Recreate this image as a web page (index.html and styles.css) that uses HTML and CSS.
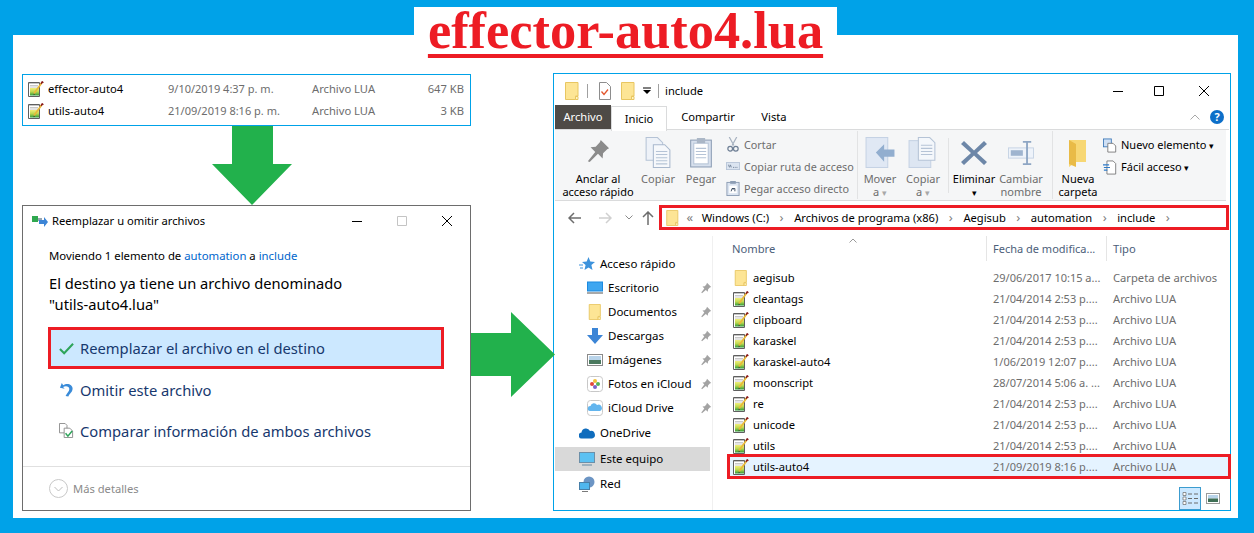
FILE: index.html
```html
<!DOCTYPE html>
<html lang="es">
<head>
<meta charset="utf-8">
<title>effector-auto4.lua</title>
<link rel="stylesheet" href="styles.css">
</head>
<body>
<svg class="defs" aria-hidden="true">
  <defs>
    <linearGradient id="luaG" x1="0" y1="0" x2="0" y2="1"><stop offset="0" stop-color="#f2ee7a"/><stop offset="0.5" stop-color="#bcd84f"/><stop offset="1" stop-color="#2f9a3a"/></linearGradient>
    <symbol id="lua" viewBox="0 0 16 16">
      <path d="M.5 1.500h11v14H.5z" fill="#fff" stroke="#5f5f5f"/>
      <path d="M1.500 2.500h9" stroke="#8a8a8a" stroke-dasharray="1 1"/>
      <path d="M2 4.500h8M2 6h8" stroke="#c8c8c8"/>
      <rect x="2" y="7" width="9" height="7.500" fill="url(#luaG)"/>
      <path d="M6 12.500 14 1.500" stroke="#e9b93a" stroke-width="1.800"/>
      <path d="M13 2.800 14.200 .8l1.200.9" stroke="#8b1a1a" stroke-width="1.400" fill="none"/>
      <path d="M6 12.600l-.6 1.600 1.500-.8z" fill="#333"/>
    </symbol>
    <symbol id="folder" viewBox="0 0 14 18">
      <path d="M.5.5h12.500v13.500h-2.500v3.500H.5z" fill="#fde595" stroke="#e8c661"/>
      <path d="M10.500 14.500h2.500v3h-2.500z" fill="#fff3c4" stroke="#e8c661"/>
    </symbol>
    <symbol id="pin" viewBox="0 0 12 12">
      <path d="M7 .8 11.200 5 9.800 5.600 8 7.500 7.800 9.800 5.800 8 2 11.200 1.300 10.500 4.300 6.500 2.500 4.500 4.800 4.200 6.500 2.300z" fill="#a3a3a3"/>
    </symbol>
  </defs>
</svg>

<div class="page">
  <h1 class="title"><span class="title-text">effector-auto4.lua</span></h1>
  <main class="panel">
    <section class="left">
      <div class="files">
        <div class="file-row">
          <svg class="ic16"><use href="#lua"/></svg>
          <span class="f-name">effector-auto4</span><span class="f-date">9/10/2019 4:37 p. m.</span><span class="f-type">Archivo LUA</span><span class="f-size">647 KB</span>
        </div>
        <div class="file-row">
          <svg class="ic16"><use href="#lua"/></svg>
          <span class="f-name">utils-auto4</span><span class="f-date">21/09/2019 8:16 p. m.</span><span class="f-type">Archivo LUA</span><span class="f-size">3 KB</span>
        </div>
      </div>
      <svg class="arrow-down" viewBox="0 0 80 79"><path d="M20 0h41v38h19L40 79 0 38h20z" fill="#22b14c"/></svg>
      <div class="dialog">
        <div class="dlg-title">
          <svg class="dlg-icon" viewBox="0 0 16 12"><rect y="1" width="6" height="6" fill="#2fa84f"/><rect x="6" y="3" width="4" height="3" fill="#9aa7b3"/><path d="M7 5h5V2l4 5-4 5V9H7z" fill="#3c85d6"/></svg>
          <span class="dlg-caption">Reemplazar u omitir archivos</span>
          <svg class="dlg-ctl" viewBox="0 0 12 12"><path d="M1 6.500h10" stroke="#000"/></svg>
          <svg class="dlg-ctl" viewBox="0 0 12 12"><path d="M1.500 1.500h9v9h-9z" fill="none" stroke="#c4c4c4"/></svg>
          <svg class="dlg-ctl" viewBox="0 0 12 12"><path d="M1 1l10 10M11 1 1 11" stroke="#000" fill="none"/></svg>
        </div>
        <p class="dlg-moving">Moviendo 1 elemento de <span class="link">automation</span> a <span class="link">include</span></p>
        <p class="dlg-main">El destino ya tiene un archivo denominado<br>"utils-auto4.lua"</p>
        <div class="option option-on">
          <svg class="opt-ic" viewBox="0 0 16 16"><path d="M1 8.500 5.500 13 15 3" fill="none" stroke="#2ea45a" stroke-width="2.200"/></svg>
          <span>Reemplazar el archivo en el destino</span>
        </div>
        <div class="option">
          <svg class="opt-ic" viewBox="0 0 16 16"><path d="M3 1 1 6l5 1.200-1.600-1.800C7 4 11 4.500 11 7.500c0 2.500-2.500 4-4 7.500l3 .5c1-3 4.500-4.500 4.500-8.500C14.500 2.500 8.500.5 4.500 3.500z" fill="#3a8bd8"/></svg>
          <span>Omitir este archivo</span>
        </div>
        <div class="option">
          <svg class="opt-ic" viewBox="0 0 16 16"><path d="M.5.5h6l2 2v8h-8z" fill="#fff" stroke="#8d8d8d"/><path d="M5.500 5.500h6l3 3v7h-9z" fill="#fff" stroke="#8d8d8d"/><path d="M7 11l2.500 3L14 8.500" fill="none" stroke="#2ea45a" stroke-width="1.600"/></svg>
          <span>Comparar información de ambos archivos</span>
        </div>
        <div class="dlg-foot">
          <svg class="more-ic" viewBox="0 0 19 19"><circle cx="9.500" cy="9.500" r="9" fill="#fff" stroke="#c8c8c8"/><path d="M5.500 8l4 4 4-4" fill="none" stroke="#bdbdbd"/></svg>
          <span>Más detalles</span>
        </div>
      </div>
    </section>

    <div class="mid">
      <svg class="arrow-right" viewBox="0 0 84 85"><path d="M0 21h40V0l44 42.500L40 85V64H0z" fill="#22b14c"/></svg>
    </div>

    <section class="explorer">
      <div class="ex-title">
        <svg class="qa-folder"><use href="#folder"/></svg>
        <i class="qa-sep"></i>
        <svg class="qa-check" viewBox="0 0 12 18"><path d="M.5.5h7l4 4v13H.5z" fill="#fff" stroke="#8d8d8d"/><path d="M2.500 9.500l2.500 3 4-5" fill="none" stroke="#e2562d" stroke-width="1.300"/></svg>
        <svg class="qa-folder2"><use href="#folder"/></svg>
        <svg class="qa-down" viewBox="0 0 8 8"><path d="M0 1h8" stroke="#000"/><path d="M0 3h8L4 7z" fill="#000"/></svg>
        <i class="qa-sep qa-sep2"></i>
        <span class="ex-caption">include</span>
        <svg class="win-ctl" viewBox="0 0 12 12"><path d="M1 6.500h10" stroke="#000"/></svg>
        <svg class="win-ctl max" viewBox="0 0 12 12"><path d="M1.500 1.500h9v9h-9z" fill="none" stroke="#000"/></svg>
        <svg class="win-ctl" viewBox="0 0 12 12"><path d="M1 1l10 10M11 1 1 11" stroke="#000" fill="none"/></svg>
      </div>
      <div class="tabs">
        <span class="tab tab-file">Archivo</span>
        <span class="tab tab-on">Inicio</span>
        <span class="tab tab-c">Compartir</span>
        <span class="tab tab-v">Vista</span>
        <svg class="tab-chev" viewBox="0 0 10 6"><path d="M.5 5.500 5 1l4.500 4.500" fill="none" stroke="#a8a8a8"/></svg>
        <span class="help">?</span>
      </div>
      <div class="ribbon">
        <div class="rb w-pin">
          <svg class="rb-ic" viewBox="0 0 26 26"><path d="M16 1l9 9-2 1-4.500 4.500-.5 5.500-5-5L4 25l-2-1 8-10-5-5 5.500-.5L15 3.500z" fill="#8b8b8b"/></svg>
          <span class="rb-l rb-on">Anclar al<br>acceso rápido</span>
        </div>
        <div class="rb w-copy">
          <svg class="rb-ic" viewBox="0 0 26 30"><path d="M1.500.5h11l5 5v17h-16z" fill="#eef2f8" stroke="#b5c3d6"/><path d="M8.500 7.500h11l5 5v17h-16z" fill="#f6f8fb" stroke="#a8b8cd"/><path d="M11 14h11M11 17h11M11 20h11M11 23h11M11 26h11" stroke="#b5c3d6"/></svg>
          <span class="rb-l">Copiar</span>
        </div>
        <div class="rb w-copy">
          <svg class="rb-ic" viewBox="0 0 22 30"><rect x="1" y="3" width="20" height="26" fill="#d7e0ed" stroke="#8c9db4"/><rect x="4" y="6" width="14" height="20" fill="#fff" stroke="#b5c3d6"/><rect x="7" y="1" width="8" height="5" fill="#aab6c6"/><path d="M6 11h10M6 14h10M6 17h10M6 20h10" stroke="#b5c3d6"/></svg>
          <span class="rb-l">Pegar</span>
        </div>
        <div class="rb-col w-small">
          <div class="rb-s"><svg class="s-ic" viewBox="0 0 14 16"><path d="M3 0l5 9M11 0 6 9" stroke="#a7b2c0" stroke-width="1.300"/><circle cx="4" cy="12.500" r="2.500" fill="none" stroke="#6e7f95" stroke-width="1.300"/><circle cx="10" cy="12.500" r="2.500" fill="none" stroke="#6e7f95" stroke-width="1.300"/></svg><span>Cortar</span></div>
          <div class="rb-s"><svg class="s-ic" viewBox="0 0 16 10"><rect x=".5" y=".5" width="15" height="8" fill="#dbe4f0" stroke="#b5c3d6"/><path d="M3 3l1 3M5 3l1 3M8 6h1M10 6h1M12 6h1" stroke="#5e7088"/></svg><span>Copiar ruta de acceso</span></div>
          <div class="rb-s"><svg class="s-ic" viewBox="0 0 14 16"><rect x=".5" y="1.500" width="13" height="14" fill="#dbe4f0" stroke="#8c9db4"/><rect x="4" y="0" width="6" height="3" fill="#8c9db4"/><rect x="3" y="5" width="8" height="8" fill="#fff"/><path d="M5 11l1-3 1.500 1M6 8h3v3" stroke="#38495f" fill="none"/></svg><span>Pegar acceso directo</span></div>
        </div>
        <i class="rb-sep"></i>
        <div class="rb w-move">
          <svg class="rb-ic" viewBox="0 0 28 30"><rect x=".5" y=".5" width="21" height="29" fill="#e0e8f4" stroke="#c5d2e4"/><path d="M10 15l8-8v5h10v7H18v5z" fill="#92aecf"/></svg>
          <span class="rb-l">Mover<br>a <b class="caret">▾</b></span>
        </div>
        <div class="rb w-move w-move2">
          <svg class="rb-ic" viewBox="0 0 28 30"><rect x=".5" y="3.500" width="21" height="26" fill="#dde6f2" stroke="#c5d2e4"/><path d="M9.500 .5h11l5 5v17h-16z" fill="#f4f7fb" stroke="#b5c3d6"/><path d="M12 8h11M12 11h11M12 14h11M12 17h11" stroke="#b5c3d6"/></svg>
          <span class="rb-l">Copiar<br>a <b class="caret">▾</b></span>
        </div>
        <i class="rb-sep short"></i>
        <div class="rb w-del">
          <svg class="rb-ic" viewBox="0 0 26 26"><path d="M3 1l10 9.500L23 1l3 3-10 9 10 9-3 3-10-9.500L3 25l-3-3 10-9L0 4z" fill="#6d87a8"/></svg>
          <span class="rb-l rb-on">Eliminar<br><b class="caret dark">▾</b></span>
        </div>
        <div class="rb w-ren">
          <svg class="rb-ic" viewBox="0 0 28 26"><rect x=".5" y="7.500" width="27" height="11" fill="#eef3fa" stroke="#c5d2e4"/><rect x="3" y="10" width="13" height="6" fill="#9fb4cf"/><path d="M16 1h9M16 25h9M20.500 1v24" stroke="#8ea6c4" stroke-width="2"/></svg>
          <span class="rb-l">Cambiar<br>nombre</span>
        </div>
        <i class="rb-sep"></i>
        <div class="rb w-new">
          <svg class="rb-ic" viewBox="0 0 20 28"><path d="M1 1h17v22H8l-7 5z" fill="#f7d774"/><path d="M1 1l7 4v23l-7-3z" fill="#e9bb47"/></svg>
          <span class="rb-l rb-on">Nueva<br>carpeta</span>
        </div>
        <div class="rb-col w-new2">
          <div class="rb-s"><svg class="s-ic" viewBox="0 0 16 16"><rect x=".5" y=".5" width="9" height="9" fill="#cfe0f5" stroke="#3c78b8"/><path d="M5.500 5.500h6l3 3v7h-9z" fill="#fff" stroke="#777"/></svg><span class="dark-t">Nuevo elemento <b class="caret dark">▾</b></span></div>
          <div class="rb-s"><svg class="s-ic" viewBox="0 0 16 16"><path d="M4.500.5h7l3 3v12h-10z" fill="#fff" stroke="#777"/><path d="M0 5h7M1 8h7M1 11h4" stroke="#2f7bc8" stroke-width="1.300"/></svg><span class="dark-t">Fácil acceso <b class="caret dark">▾</b></span></div>
        </div>
      </div>
      <div class="addr-row">
        <svg class="nav-btn" viewBox="0 0 14 12"><path d="M6 1 1 6l5 5M1 6h12" fill="none" stroke="#6d6d6d" stroke-width="1.500"/></svg>
        <svg class="nav-btn fwd" viewBox="0 0 14 12"><path d="M8 1l5 5-5 5M13 6H1" fill="none" stroke="#d0d0d0" stroke-width="1.500"/></svg>
        <svg class="nav-drop" viewBox="0 0 8 5"><path d="M.5.5 4 4 7.500.5" fill="none" stroke="#8a8a8a"/></svg>
        <svg class="nav-up" viewBox="0 0 12 14"><path d="M1 6l5-5 5 5M6 1v13" fill="none" stroke="#6d6d6d" stroke-width="1.500"/></svg>
        <div class="addr">
          <svg class="addr-folder"><use href="#folder"/></svg>
          <span class="crumb-sep dbl">«</span>
          <span>Windows (C:)</span><span class="crumb-sep">›</span>
          <span>Archivos de programa (x86)</span><span class="crumb-sep">›</span>
          <span>Aegisub</span><span class="crumb-sep">›</span>
          <span>automation</span><span class="crumb-sep">›</span>
          <span>include</span><span class="crumb-sep">›</span>
        </div>
      </div>
      <div class="ex-body">
        <nav class="nav">
          <div class="nv top"><svg class="nv-ic" viewBox="0 0 16 16"><path d="M9.500 1 11.300 5.600 16 6 12.400 9.100 13.500 14 9.500 11.400 5.500 14 6.600 9.100 3 6 7.700 5.600z" fill="#3c92dc"/><path d="M0 9h4M1 12h3" stroke="#3c92dc"/></svg><span>Acceso rápido</span></div>
          <div class="nv sub"><svg class="nv-ic" viewBox="0 0 16 13"><rect width="16" height="10" fill="#1b8ae0"/><rect x="1" y="1" width="14" height="8" fill="#3ea6f0"/><rect y="11" width="16" height="1" fill="#555"/></svg><span>Escritorio</span><svg class="nv-pin"><use href="#pin"/></svg></div>
          <div class="nv sub"><svg class="nv-ic"><use href="#folder"/></svg><span>Documentos</span><svg class="nv-pin"><use href="#pin"/></svg></div>
          <div class="nv sub"><svg class="nv-ic" viewBox="0 0 16 16"><path d="M5 0h6v7h5l-8 9-8-9h5z" fill="#3c85d6"/></svg><span>Descargas</span><svg class="nv-pin"><use href="#pin"/></svg></div>
          <div class="nv sub"><svg class="nv-ic" viewBox="0 0 16 12"><rect x=".5" y=".5" width="15" height="11" fill="#fff" stroke="#8a8a8a"/><rect x="2" y="2" width="12" height="4" fill="#b9d4ea"/><rect x="2" y="6" width="12" height="4" fill="#4b7a5f"/></svg><span>Imágenes</span><svg class="nv-pin"><use href="#pin"/></svg></div>
          <div class="nv sub"><svg class="nv-ic" viewBox="0 0 16 16"><rect x=".5" y=".5" width="15" height="15" rx="3" fill="#fff" stroke="#c8c8c8"/><circle cx="8" cy="5" r="2" fill="#f3c13a"/><circle cx="11" cy="8" r="2" fill="#52b356"/><circle cx="8" cy="11" r="2" fill="#7a63c9"/><circle cx="5" cy="8" r="2" fill="#e2473b"/></svg><span>Fotos en iCloud</span><svg class="nv-pin"><use href="#pin"/></svg></div>
          <div class="nv sub"><svg class="nv-ic" viewBox="0 0 16 16"><rect x=".5" y=".5" width="15" height="15" rx="3" fill="#fff" stroke="#c8c8c8"/><path d="M3 11a2.500 2.500 0 0 1 .5-5 3.500 3.500 0 0 1 6.500-1 3 3 0 0 1 3 6z" fill="#62b5ee"/></svg><span>iCloud Drive</span><svg class="nv-pin"><use href="#pin"/></svg></div>
          <div class="nv top one"><svg class="nv-ic" viewBox="0 0 16 11"><path d="M3 11a3 3 0 0 1-.5-6A4.500 4.500 0 0 1 11 3.500 3.800 3.800 0 0 1 13 11z" fill="#0f6cbd"/></svg><span>OneDrive</span></div>
          <div class="nv top pc"><svg class="nv-ic" viewBox="0 0 16 14"><rect x=".5" y=".5" width="15" height="10" fill="#5cc1f2" stroke="#6c8fa8"/><path d="M3 13h10" stroke="#8aa3b5" stroke-width="1.500"/></svg><span>Este equipo</span></div>
          <div class="nv top"><svg class="nv-ic" viewBox="0 0 16 16"><circle cx="10" cy="6" r="5.500" fill="#6c95c4"/><rect x=".5" y="6.500" width="10" height="7" fill="#4fb6ee" stroke="#477fa8"/><path d="M3 15.500h6" stroke="#7a7a7a"/></svg><span>Red</span></div>
        </nav>
        <div class="list">
          <svg class="sort" viewBox="0 0 8 5"><path d="M.5 4.500 4 1l3.500 3.500" fill="none" stroke="#9a9a9a"/></svg>
          <div class="row head"><span class="c-name">Nombre</span><span class="c-date">Fecha de modifica...</span><span class="c-type">Tipo</span></div>
          <div class="row"><svg class="row-ic folder-ic"><use href="#folder"/></svg><span class="c-name">aegisub</span><span class="c-date">29/06/2017 10:15 a...</span><span class="c-type">Carpeta de archivos</span></div>
          <div class="row"><svg class="row-ic"><use href="#lua"/></svg><span class="c-name">cleantags</span><span class="c-date">21/04/2014 2:53 p....</span><span class="c-type">Archivo LUA</span></div>
          <div class="row"><svg class="row-ic"><use href="#lua"/></svg><span class="c-name">clipboard</span><span class="c-date">21/04/2014 2:53 p....</span><span class="c-type">Archivo LUA</span></div>
          <div class="row"><svg class="row-ic"><use href="#lua"/></svg><span class="c-name">karaskel</span><span class="c-date">21/04/2014 2:53 p....</span><span class="c-type">Archivo LUA</span></div>
          <div class="row"><svg class="row-ic"><use href="#lua"/></svg><span class="c-name">karaskel-auto4</span><span class="c-date">1/06/2019 12:07 p....</span><span class="c-type">Archivo LUA</span></div>
          <div class="row"><svg class="row-ic"><use href="#lua"/></svg><span class="c-name">moonscript</span><span class="c-date">28/07/2014 5:06 a. ...</span><span class="c-type">Archivo LUA</span></div>
          <div class="row"><svg class="row-ic"><use href="#lua"/></svg><span class="c-name">re</span><span class="c-date">21/04/2014 2:53 p....</span><span class="c-type">Archivo LUA</span></div>
          <div class="row"><svg class="row-ic"><use href="#lua"/></svg><span class="c-name">unicode</span><span class="c-date">21/04/2014 2:53 p....</span><span class="c-type">Archivo LUA</span></div>
          <div class="row"><svg class="row-ic"><use href="#lua"/></svg><span class="c-name">utils</span><span class="c-date">21/04/2014 2:53 p....</span><span class="c-type">Archivo LUA</span></div>
          <div class="row row-sel"><svg class="row-ic"><use href="#lua"/></svg><span class="c-name">utils-auto4</span><span class="c-date">21/09/2019 8:16 p....</span><span class="c-type">Archivo LUA</span></div>
          <div class="views">
            <span class="view view-on"><svg viewBox="0 0 16 13" class="view-ic"><path d="M1 .5h3v3H1zM1 5h3v3H1zM1 9.500h3v3H1z" fill="#fff" stroke="#6a6a6a" stroke-width=".7"/><path d="M6 2h4M12 2h4M6 6.500h4M12 6.500h4M6 11h4M12 11h4" stroke="#6a6a6a"/></svg></span>
            <svg viewBox="0 0 14 11" class="view-th"><rect x=".5" y=".5" width="13" height="10" fill="#fff" stroke="#9a9a9a"/><rect x="2" y="2" width="10" height="3.500" fill="#b9d4ea"/><rect x="2" y="5.500" width="10" height="3.500" fill="#3f6f55"/></svg>
          </div>
        </div>
      </div>
    </section>
  </main>
</div>
</body>
</html>
```

FILE: styles.css
```css
* { box-sizing: border-box; }
html, body { margin: 0; height: 100%; }
body {
  background: #00a2e8;
  font-family: "Noto Sans", "Open Sans", sans-serif;
  font-size: 11.2px;
  color: #000;
  overflow: hidden;
}
svg { display: block; flex: none; }
.defs { width: 0; height: 0; overflow: hidden; }

.page {
  width: 1225px;
  margin-left: 13px;
  padding-top: 7px;
  display: flex;
  flex-direction: column;
}
.title {
  align-self: center;
  width: 423px;
  height: 50px;
  margin: 0 0 -22px;
  background: #fff;
  position: relative;
  text-align: center;
  font: bold 52.4px/46px "Liberation Serif", serif;
  color: #ed1c24;
}
.title-text {
  text-decoration: underline;
  text-decoration-thickness: 4px;
  text-underline-offset: 6px;
  text-decoration-skip-ink: none;
}
.panel {
  height: 483px;
  background: #fff;
  padding: 38px 7px 7px 9px;
  display: grid;
  grid-template-columns: 449px 82px 678px;
}

/* left column */
.left { display: flex; flex-direction: column; padding-top: 1px; }
.files {
  height: 52px;
  border: 1px solid #00a2e8;
  padding: 6px 6px 0 5px;
  display: flex;
  flex-direction: column;
  gap: 6px;
}
.file-row { height: 16px; display: flex; align-items: center; line-height: 16px; }
.ic16, .row-ic { width: 16px; height: 16px; }
.f-name { width: 120px; margin-left: 4px; }
.f-date { width: 144px; color: #6d6d6d; font-size: 11px; }
.f-type { width: 90px; color: #6d6d6d; }
.f-size { flex: 1; text-align: right; color: #6d6d6d; }
.arrow-down { width: 80px; height: 79px; margin-left: 190px; }

.dialog {
  height: 306px;
  border: 1px solid #6d6d6d;
  display: flex;
  flex-direction: column;
}
.dlg-title { height: 28px; padding: 1px 0 0 9px; display: flex; align-items: center; }
.dlg-icon { width: 16px; height: 12px; }
.dlg-caption { width: 299px; margin-left: 4px; }
.dlg-ctl { width: 12px; height: 12px; margin-right: 33px; }
.dlg-ctl:last-child { margin-right: 0; }
.dlg-moving { margin: 11px 0 0 26px; line-height: 22px; font-size: 11.35px; }
.link { color: #0066cc; }
.dlg-main { margin: 6px 0 0 26px; font-size: 14.7px; line-height: 21px; }
.option {
  margin: 0 26px 0 25px;
  height: 41px;
  padding-left: 11px;
  display: flex;
  align-items: center;
  gap: 6px;
  font-size: 14.75px;
  color: #17386e;
}
.option-on {
  margin-top: 12px;
  height: 42px;
  background: #cce8ff;
  border: 3px solid #ed1c24;
  padding-left: 8px;
}
.opt-ic { width: 15px; height: 15px; }
.dlg-foot {
  margin-top: auto;
  height: 44px;
  border-top: 1px solid #e0e0e0;
  padding-left: 26px;
  display: flex;
  align-items: center;
  gap: 5px;
  color: #8a8a8a;
}
.more-ic { width: 19px; height: 19px; }

/* middle arrow */
.mid { padding-top: 239px; }
.arrow-right { width: 84px; height: 85px; position: relative; z-index: 1; }

/* explorer */
.explorer {
  height: 438px;
  border: 1px solid #00a2e8;
  padding: 0 1px;
  display: flex;
  flex-direction: column;
}
.ex-title { height: 31px; padding: 2px 0 0 10px; display: flex; align-items: center; }
.qa-folder, .qa-folder2 { width: 14px; height: 18px; }
.qa-sep { width: 1px; height: 14px; background: #a0a0a0; margin: 0 11px 0 8px; }
.qa-check { width: 12px; height: 18px; }
.qa-folder2 { margin-left: 10px; }
.qa-down { width: 8px; height: 8px; margin-left: 8px; }
.qa-sep2 { margin: 0 6px 0 7px; }
.ex-caption { width: 447px; }
.win-ctl { width: 12px; height: 12px; margin-right: 29px; }
.win-ctl.max { margin-right: 33px; }
.win-ctl:last-child { margin-right: 0; }

.tabs { height: 25px; display: flex; align-items: center; border-bottom: 1px solid #dadbdc; position: relative; }
.tab { height: 24px; line-height: 24px; text-align: center; }
.tab-file { width: 56px; background: #4e4a46; color: #fff; }
.tab-on { width: 56px; height: 25px; background: #fff; border: 1px solid #dadbdc; border-bottom: 0; position: relative; top: 1px; }
.tab-c { width: 82px; }
.tab-v { width: 50px; margin-right: 391px; }
.tab-chev { width: 10px; height: 6px; margin-right: 10px; }
.help { width: 14px; height: 14px; border-radius: 50%; background: #0d6fc9; color: #fff; font: bold 11px/14px "Noto Sans", sans-serif; text-align: center; }

.ribbon {
  height: 71px;
  width: 671px;
  background: #f5f6f7;
  border-bottom: 1px solid #dadbdc;
  padding-left: 8px;
  display: flex;
  color: #6d6d6d;
  line-height: 13px;
  font-size: 11px;
}
.rb { display: flex; flex-direction: column; align-items: center; padding-top: 7px; height: 70px; text-align: center; position: relative; }
.rb-ic { height: 31px; width: 30px; }
.rb-l { margin-top: 4px; white-space: nowrap; }
.rb-on { color: #000; }
.w-pin { width: 70px; }
.w-pin .rb-ic { width: 24px; height: 24px; margin-top: 2px; margin-bottom: 5px; }
.w-copy { width: 36px; margin-left: 7px; }
.w-small { width: 131px; margin-left: 7px; font-size: 10.8px; padding-top: 5px; }
.rb-col { display: flex; flex-direction: column; gap: 4px; }
.rb-s { height: 18px; display: flex; align-items: center; gap: 4px; white-space: nowrap; }
.s-ic { width: 14px; height: 15px; }
.dark-t { color: #000; }
.rb-sep { width: 1px; height: 68px; background: #e2e3e4; margin: 1px 5px 0 0; }
.rb-sep.short { height: 55px; margin: 8px 2px 0 7px; }
.w-move { width: 36px; margin-left: -1px; }
.w-move2 { margin-left: 7px; }
.w-del { width: 46px; }
.w-del .rb-ic, .w-ren .rb-ic { width: 26px; height: 26px; margin-top: 3px; margin-bottom: 2px; }
.w-ren { width: 46px; margin-left: 1px; margin-right: 8px; }
.w-new { width: 40px; }
.w-new .rb-ic { width: 20px; height: 28px; margin-top: 2px; margin-bottom: 1px; }
.w-new2 { margin-left: 5px; padding-top: 6px; white-space: nowrap; }
.caret { font-weight: normal; font-size: 9px; color: #a8a8a8; }
.caret.dark { color: #000; }

.addr-row { height: 35px; display: flex; align-items: flex-start; padding: 4px 0 0 13px; }
.nav-btn { width: 14px; height: 12px; margin-top: 7px; }
.fwd { margin-left: 16px; }
.nav-drop { width: 8px; height: 5px; margin: 10px 0 0 13px; }
.nav-up { width: 12px; height: 14px; margin: 6px 0 0 9px; }
.addr {
  width: 570px;
  height: 25px;
  margin-left: 5px;
  border: 3px solid #ed1c24;
  padding-left: 4px;
  display: flex;
  align-items: center;
  gap: 10.5px;
  line-height: 19px;
}
.addr-folder { width: 13px; height: 16px; margin-right: -3px; }
.crumb-sep { color: #808080; font-size: 13px; }
.crumb-sep.dbl { margin-right: -2px; }

.ex-body { flex: 1; display: flex; min-height: 0; }
.nav { width: 158px; border-right: 1px solid #f0f0f0; padding-top: 16px; font-size: 11.5px; }
.nv { height: 24px; display: flex; align-items: center; padding-left: 26px; line-height: 24px; }
.nv-ic { width: 16px; height: 16px; margin-right: 5px; }
.nv.sub { padding-left: 32px; }
.nv.sub .nv-ic { margin-right: 5px; }
.nv.sub span { width: 95px; }
.nv-pin { width: 12px; height: 12px; }
.nv.top { padding-left: 24px; }
.nv.one { margin-top: 1px; }
.nv.pc { margin: 2px 2px 1px 0; background: #d9d9d9; }

.list { flex: 1; padding: 0 0 0 14px; position: relative; display: flex; flex-direction: column; }
.sort { position: absolute; left: 136px; top: 2px; width: 8px; height: 5px; }
.row { height: 21px; display: flex; align-items: center; padding-left: 6px; color: #6d6d6d; line-height: 21px; position: relative; }
.row-ic { margin-right: 4px; }
.folder-ic { width: 14px; height: 16px; margin: 0 5px 0 1px; }
.c-name { width: 240px; color: #000; white-space: nowrap; }
.c-date { width: 120px; white-space: nowrap; font-size: 11px; }
.c-type { white-space: nowrap; }
.head { height: 25px; margin-bottom: 6px; padding-left: 5px; color: #4c607a; }
.head .c-name { width: 261px; color: #4c607a; }
.head .c-date, .head .c-type { position: relative; }
.head .c-date::before, .head .c-type::before {
  content: "";
  position: absolute;
  left: -7px;
  top: -2px;
  width: 1px;
  height: 25px;
  background: #e5e5e5;
}
.row-sel { background: #e5f3ff; box-shadow: 0 0 0 3px #ed1c24; height: 19px; margin: 1px 1px 0 3px; padding-left: 3px; }
.views { margin-top: auto; display: flex; align-items: center; justify-content: flex-end; padding-right: 9px; gap: 5px; }
.view { width: 22px; height: 23px; background: #cce8ff; border: 1px solid #3c9ccf; display: flex; align-items: center; justify-content: center; }
.view-ic { width: 16px; height: 13px; }
.view-th { width: 14px; height: 11px; }
```
